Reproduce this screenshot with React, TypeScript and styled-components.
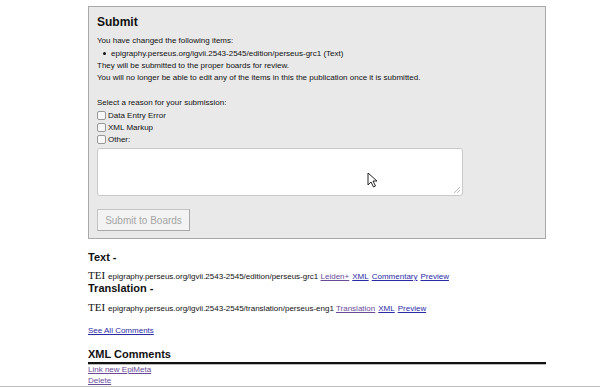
import React from 'react'
import styled, { createGlobalStyle } from 'styled-components'

const GlobalStyle = createGlobalStyle`
    html, body {
        margin: 0;
        padding: 0;
        background: #fff;
    }
    body {
        font-family: 'Liberation Sans', Arial, sans-serif;
        color: #111;
        overflow: hidden;
    }
`

const Page = styled.div`
    width: 600px;
    height: 387px;
    overflow: hidden;
    border-bottom: 1px solid #bdbdbd;
    box-sizing: border-box;
`

const Content = styled.div`
    width: 458px;
    margin-left: 88px;
`

// tail of a line that sits above the visible area
const CutLine = styled.div`
    margin-top: -11px;
    height: 17px;
    padding-left: 14px;
    font-size: 11px;
    line-height: 11px;
    color: #444;
    white-space: nowrap;
`

const Panel = styled.div`
    background: #e9e9e9;
    border: 1px solid #a9a9a9;
    padding: 8px;
    height: 233px;
    box-sizing: border-box;
`

const Title = styled.h2`
    margin: 0 0 6px;
    font-size: 12px;
    line-height: 14px;
    font-weight: bold;
`

const Small = styled.p<{ $gap?: number }>`
    margin: 0 0 ${(p) => p.$gap ?? 0}px;
    font-size: 8px;
    line-height: 12px;
`

const ItemList = styled.ul`
    margin: 0;
    padding: 0 0 0 6px;
    list-style: none;
    font-size: 8px;
    line-height: 13px;
`

const Item = styled.li`
    display: flex;
    align-items: center;
    &::before {
        content: '';
        width: 3px;
        height: 3px;
        border-radius: 50%;
        background: #111;
        margin-right: 5px;
    }
`

const CheckRow = styled.label`
    display: flex;
    align-items: flex-end;
    height: 12px;
    font-size: 8px;
    line-height: 12px;
`

const Box = styled.span`
    width: 9px;
    height: 9px;
    margin: 0 2px 2px 0;
    border: 1px solid #999;
    border-radius: 2px;
    background: #f7f7f7;
    box-sizing: border-box;
`

const AreaWrap = styled.div`
    position: relative;
    width: 366px;
    height: 48px;
    margin-top: 2px;
    background: #fff;
    border: 1px solid #c9c9c9;
    border-radius: 3px;
    box-sizing: border-box;
`

const Grip = styled.svg`
    position: absolute;
    right: 1px;
    bottom: 1px;
`

const Cursor = styled.svg`
    position: absolute;
    left: 269px;
    top: 23px;
`

const Button = styled.button`
    display: block;
    margin-top: 13px;
    width: 93px;
    height: 22px;
    padding: 0;
    background: #f3f3f3;
    border: 1px solid #c4c4c4;
    border-right-color: #a8a8a8;
    border-bottom-color: #a8a8a8;
    color: #a5a5a5;
    font-family: 'Liberation Sans', Arial, sans-serif;
    font-size: 10px;
`

const Heading = styled.h3<{ $top: number }>`
    margin: ${(p) => p.$top}px 0 0;
    font-size: 11px;
    line-height: 14px;
    font-weight: bold;
`

const FileRow = styled.div<{ $top: number }>`
    margin-top: ${(p) => p.$top}px;
    font-size: 8px;
    line-height: 12px;
    white-space: nowrap;
`

const Tei = styled.span`
    font-family: 'Liberation Serif', 'Times New Roman', serif;
    font-size: 11px;
    margin-right: 3px;
`

const Link = styled.a<{ $visited?: boolean }>`
    color: ${(p) => (p.$visited ? '#6b4a9a' : '#2b2ba8')};
    text-decoration: underline;
    margin-right: 3px;
    cursor: pointer;
`

const Block = styled.div<{ $top: number }>`
    margin-top: ${(p) => p.$top}px;
    font-size: 8px;
    line-height: 11px;
`

const Rule = styled.div`
    margin-top: 1px;
    border-top: 2px solid #111;
    box-shadow: 0 1px 0 #bbb;
`

const reasons = ['Data Entry Error', 'XML Markup', 'Other:']

const App: React.FC = () => {
    return (
        <Page>
            <GlobalStyle />
            <Content>
                <CutLine>
                    epigraphy.perseus.org/igvii.2543-2545 — publication / submit pending and ready for voting
                </CutLine>
                <Panel>
                    <Title>Submit</Title>
                    <Small>You have changed the following items:</Small>
                    <ItemList>
                        <Item>epigraphy.perseus.org/igvii.2543-2545/edition/perseus-grc1 (Text)</Item>
                    </ItemList>
                    <Small>They will be submitted to the proper boards for review.</Small>
                    <Small $gap={13}>
                        You will no longer be able to edit any of the items in this the publication once it is submitted.
                    </Small>
                    <Small $gap={1}>Select a reason for your submission:</Small>
                    {reasons.map((r) => (
                        <CheckRow key={r}>
                            <Box />
                            {r}
                        </CheckRow>
                    ))}
                    <AreaWrap>
                        <Cursor width="11" height="16" viewBox="0 0 11 16">
                            <path
                                d="M1 1 L1 13 L4 10 L6.5 15 L8.5 14 L6 9 L10 9 Z"
                                fill="#fff"
                                stroke="#222"
                                strokeWidth="1"
                                strokeLinejoin="round"
                            />
                        </Cursor>
                        <Grip width="8" height="8" viewBox="0 0 8 8">
                            <path d="M7 1 L1 7 M7 4 L4 7" stroke="#bbb" strokeWidth="1" />
                        </Grip>
                    </AreaWrap>
                    <Button disabled>Submit to Boards</Button>
                </Panel>
                <Heading $top={11}>Text -</Heading>
                <FileRow $top={5}>
                    <Tei>TEI</Tei>
                    epigraphy.perseus.org/igvii.2543-2545/edition/perseus-grc1{' '}
                    <Link $visited>Leiden+</Link>
                    <Link>XML</Link>
                    <Link>Commentary</Link>
                    <Link>Preview</Link>
                </FileRow>
                <Heading $top={-2}>Translation -</Heading>
                <FileRow $top={6}>
                    <Tei>TEI</Tei>
                    epigraphy.perseus.org/igvii.2543-2545/translation/perseus-eng1{' '}
                    <Link $visited>Translation</Link>
                    <Link>XML</Link>
                    <Link>Preview</Link>
                </FileRow>
                <Block $top={10}>
                    <Link>See All Comments</Link>
                </Block>
                <Heading $top={11}>XML Comments</Heading>
                <Rule />
                <Block $top={0}>
                    <Link $visited>Link new EpiMeta</Link>
                </Block>
                <Block $top={0}>
                    <Link $visited>Delete</Link>
                </Block>
            </Content>
        </Page>
    )
}

export default App
